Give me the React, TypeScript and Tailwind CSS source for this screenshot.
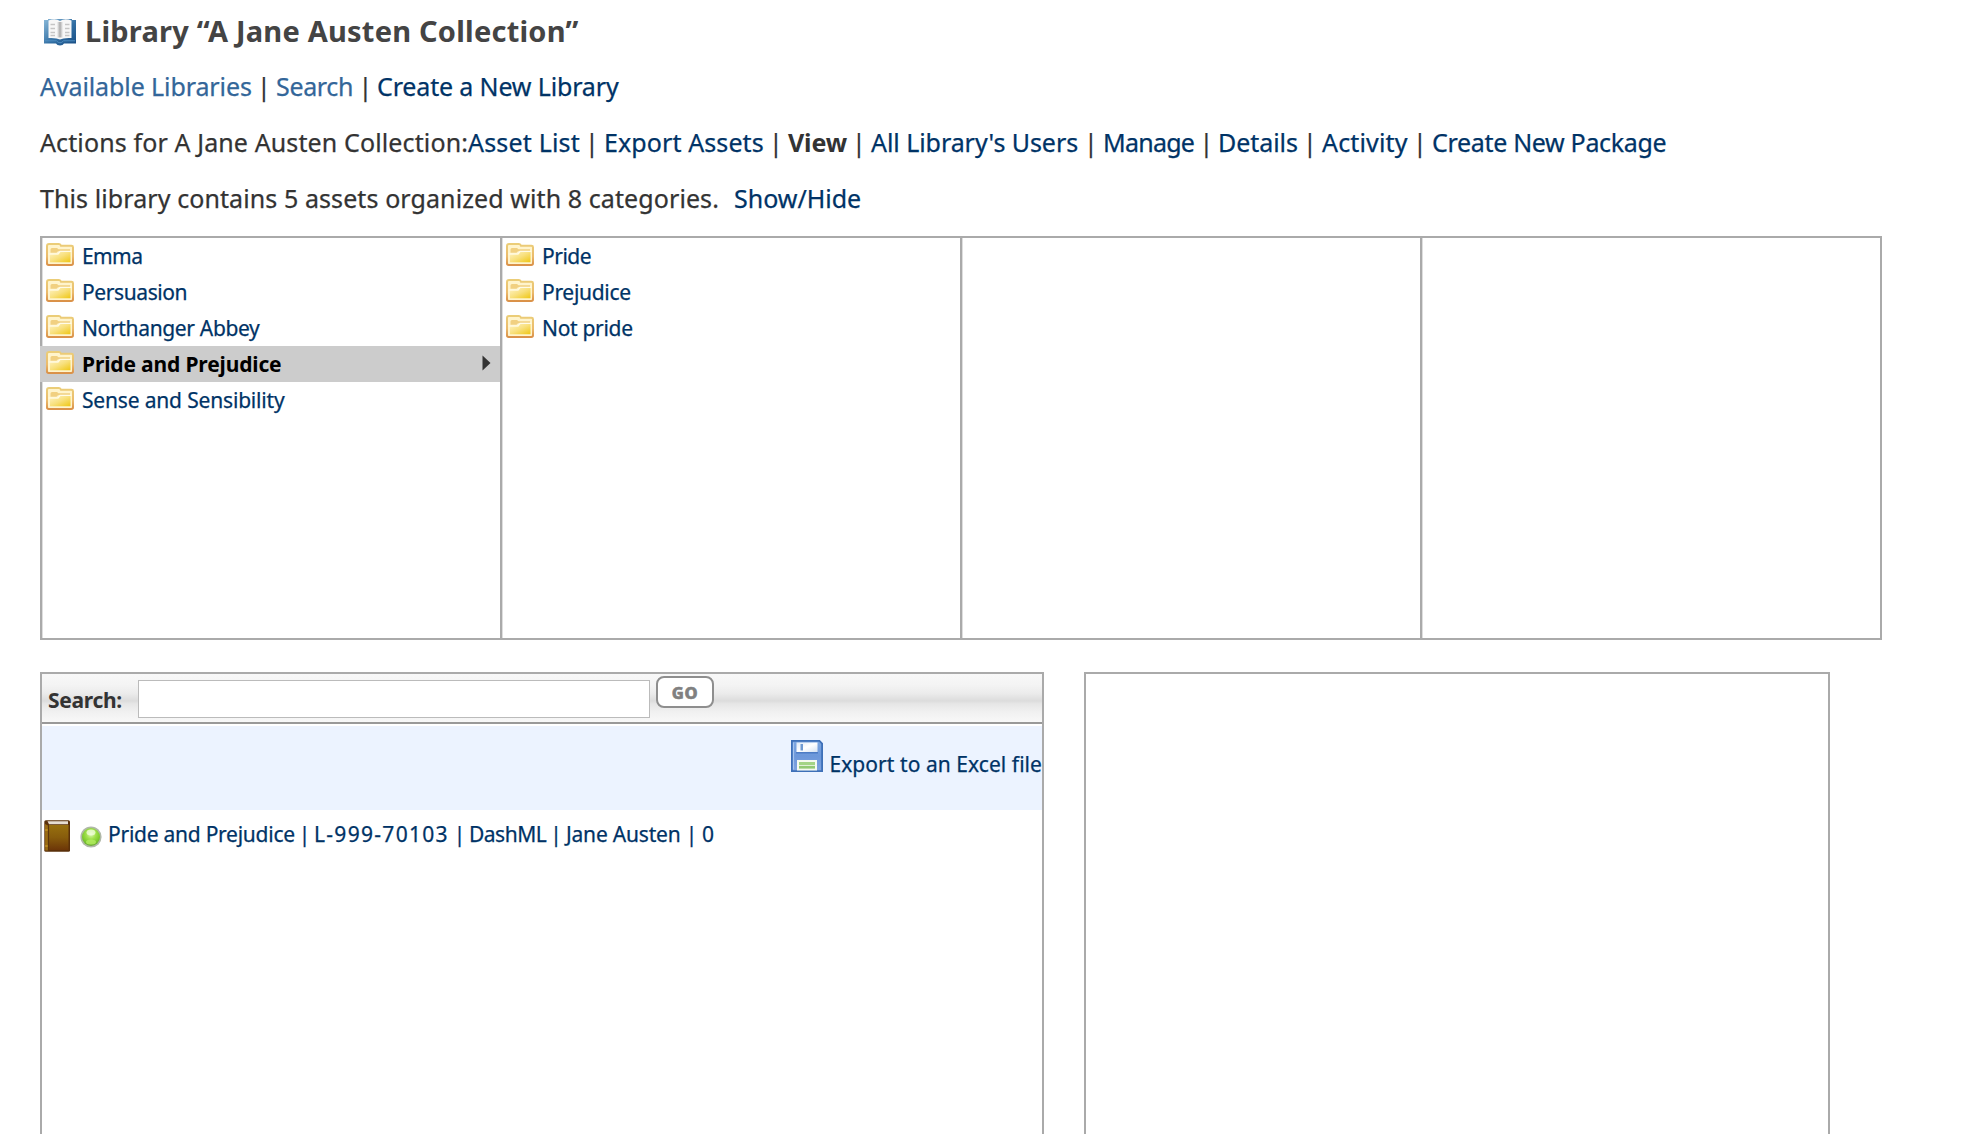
import type { ReactNode } from 'react';

const NAVY = 'text-[#003366]';

function Folder() {
  return (
    <svg className="h-[23px] w-7 shrink-0" viewBox="0 0 28 23" aria-hidden="true">
      <defs>
        <linearGradient id="folderEdge" x1="0" y1="0" x2="0" y2="1">
          <stop offset="0" stopColor="#ebcd78" />
          <stop offset="0.6" stopColor="#ebbb6c" />
          <stop offset="1" stopColor="#da9148" />
        </linearGradient>
        <linearGradient id="folderFill" x1="0" y1="0" x2="1" y2="1">
          <stop offset="0" stopColor="#fff3c4" />
          <stop offset="0.5" stopColor="#f8e07c" />
          <stop offset="1" stopColor="#efc714" />
        </linearGradient>
      </defs>
      <path d="M1 3Q1 1 3 1h10q1.500 0 2 1.800h10.500q1.500 0 1.500 1.400v16q0 1.700-1.800 1.700H2.700Q1 21.900 1 20.200z" fill="#fff4cc" stroke="url(#folderEdge)" strokeWidth="2" />
      <path d="M4.500 6.500q0-1.500 1.500-1.500h5l1.500 1.200H24v2H12l-1.500 1.500h-6z" fill="#f1d081" />
      <path d="M4 11.500h8.500l2-2.500H24.500v10.200H4z" fill="url(#folderFill)" />
      <path d="M2.500 11h9.500l2-2.600h11.500" fill="none" stroke="#fffbe8" strokeWidth="1.200" />
    </svg>
  );
}

function OpenBook() {
  return (
    <svg className="h-7 w-8 shrink-0" viewBox="0 0 32 28" aria-hidden="true">
      <defs>
        <linearGradient id="cover" x1="0" y1="0" x2="1" y2="1">
          <stop offset="0" stopColor="#8ab9d9" />
          <stop offset="0.55" stopColor="#326fa3" />
          <stop offset="1" stopColor="#174c83" />
        </linearGradient>
        <linearGradient id="gutter" x1="0" y1="0" x2="1" y2="0">
          <stop offset="0" stopColor="#f5f5f5" />
          <stop offset="0.5" stopColor="#aaa" />
          <stop offset="1" stopColor="#f5f5f5" />
        </linearGradient>
      </defs>
      <path d="M0 2h4V1h24v1h4v23.500H20q-1 2-4 2t-4-2H0z" fill="url(#cover)" />
      <path d="M4.500 2.500q7-2.500 11.500.5 4.500-3 11.500-.5V20q-8-.5-11.500 1.500-3.500-2-11.500-1.500z" fill="#f7f7f7" />
      <rect x="13" y="4" width="6" height="15.500" fill="url(#gutter)" />
      <path d="M6.500 6.500H11M6.500 10.500H11M6.500 14.500H11M6.500 17.500H11M21 6.500h4.500M21 10.500h4.500M21 14.500h4.500M21 17.500h4.500" stroke="#c5c5c5" strokeWidth="1.300" />
      <path d="M1 22.800h11.500q1.500 2 3.500 2t3.500-2H31" fill="none" stroke="#4f8dc0" strokeWidth="1" />
    </svg>
  );
}

function ClosedBook() {
  return (
    <svg className="h-8 w-[26px] shrink-0" viewBox="0 0 26 32" aria-hidden="true">
      <defs>
        <linearGradient id="leather" x1="0" y1="0" x2="0" y2="1">
          <stop offset="0" stopColor="#98700f" />
          <stop offset="0.5" stopColor="#875c0c" />
          <stop offset="1" stopColor="#6c3608" />
        </linearGradient>
      </defs>
      <rect x="0.300" y="0.300" width="25.700" height="31.500" rx="1.500" fill="#5a300a" />
      <path d="M3.500 1.200h20.500v3H5z" fill="#e6ddd2" />
      <rect x="5" y="5" width="19.500" height="25" fill="url(#leather)" />
      <path d="M1 4l3 1.500V30.500H1.200z" fill="#9a6b12" />
      <path d="M4.500 5v26" stroke="#5c350a" strokeWidth="1.200" />
      <path d="M1.200 10h2.600M1.200 26h2.600" stroke="#d9a92e" strokeWidth="1" />
    </svg>
  );
}

function StatusBall() {
  return (
    <svg className="size-[22px] shrink-0" viewBox="0 0 22 22" aria-hidden="true">
      <defs>
        <radialGradient id="ball" cx="0.5" cy="0.35" r="0.62">
          <stop offset="0" stopColor="#dcf7b8" />
          <stop offset="0.4" stopColor="#a4e250" />
          <stop offset="0.8" stopColor="#7cc92c" />
          <stop offset="1" stopColor="#70ad3a" />
        </radialGradient>
      </defs>
      <circle cx="11" cy="11" r="10.600" fill="#b0b8a8" />
      <circle cx="11" cy="11" r="9" fill="url(#ball)" />
      <ellipse cx="11" cy="6.500" rx="4.500" ry="3" fill="#f3ffe0" opacity="0.750" />
      <ellipse cx="11" cy="16" rx="5" ry="2.500" fill="#b3ec62" opacity="0.800" />
    </svg>
  );
}

function Floppy() {
  return (
    <svg className="size-8 shrink-0" viewBox="0 0 32 32" aria-hidden="true">
      <defs>
        <linearGradient id="disk" x1="0" y1="0" x2="0" y2="1">
          <stop offset="0" stopColor="#7da6e0" />
          <stop offset="0.5" stopColor="#6c97da" />
          <stop offset="1" stopColor="#7fa3e0" />
        </linearGradient>
        <linearGradient id="shutter" x1="0" y1="0" x2="1" y2="1">
          <stop offset="0" stopColor="#dfe9f5" />
          <stop offset="0.5" stopColor="#fff" />
          <stop offset="1" stopColor="#d5e2f3" />
        </linearGradient>
      </defs>
      <path d="M.9.900H28.500L31.100 3.500V31.100H.9z" fill="url(#disk)" stroke="#3e70b8" strokeWidth="1.800" />
      <path d="M2.500 2.500v27" stroke="#a5c4ee" strokeWidth="1.200" />
      <rect x="5.500" y="2.500" width="21" height="9.500" fill="url(#shutter)" />
      <rect x="9.500" y="4" width="2.500" height="6.500" fill="#6f9ad2" />
      <path d="M5 12.800h22" stroke="#4a79c2" strokeWidth="1.400" />
      <rect x="6" y="20" width="20" height="10.500" fill="#f5faf0" />
      <rect x="8" y="22" width="16" height="3" fill="#a4d486" />
      <rect x="8" y="25.800" width="16" height="2.800" fill="#93c974" />
    </svg>
  );
}

function Link({ className, children }: { className: string; children: ReactNode }) {
  return (
    <a href="#" className={`block shrink-0 ${className}`}>
      {children}
    </a>
  );
}

function Bar({ className }: { className: string }) {
  return <span className={`block shrink-0 text-center ${className}`}>|</span>;
}

function FolderRow({ label, tracking }: { label: string; tracking: string }) {
  return (
    <li className="flex h-9 pl-1 leading-9">
      <div className="pt-[5px]">
        <Folder />
      </div>
      <Link className={`ml-2 ${NAVY} ${tracking}`}>{label}</Link>
    </li>
  );
}

const column = 'w-[460px] border-l-2 border-[#aaaaaa] shadow-[inset_1px_0_0_#dedede]';

export default function App() {
  return (
    <div className="h-[1134px] w-[1988px] overflow-hidden whitespace-nowrap bg-white pl-10 font-['Noto_Sans',sans-serif] text-[#333333] [-webkit-text-stroke:0.25px]">
      <h1 className="flex h-[58px] pl-1 pt-[11px] text-[29px] font-bold leading-10 tracking-[0.22px] text-[#444444] [-webkit-text-stroke:0]">
        <div className="pt-[7px]">
          <OpenBook />
        </div>
        <span className="ml-[9px]">Library “A Jane Austen Collection”</span>
      </h1>

      <nav className="flex h-14 text-[25px] leading-[56px]">
        <Link className="w-[212px] tracking-[-0.1px] text-[#336699]">Available Libraries</Link>
        <Bar className="w-[24px]" />
        <Link className="w-[78px] tracking-[-0.35px] text-[#336699]">Search</Link>
        <Bar className="w-[23px]" />
        <Link className={`tracking-[-0.15px] ${NAVY}`}>Create a New Library</Link>
      </nav>

      <nav className="flex h-14 text-[25px] leading-[56px]">
        <span className="w-[428px] shrink-0 tracking-[0.12px]">Actions for A Jane Austen Collection:</span>
        <Link className={`w-[112px] tracking-[0.19px] ${NAVY}`}>Asset List</Link>
        <Bar className="w-6" />
        <Link className={`w-[160px] tracking-[0.1px] ${NAVY}`}>Export Assets</Link>
        <Bar className="w-6" />
        <b className="w-[59px] shrink-0 tracking-[-0.15px] [-webkit-text-stroke:0]">View</b>
        <Bar className="w-6" />
        <Link className={`w-[208px] tracking-[-0.06px] ${NAVY}`}>All Library's Users</Link>
        <Bar className="w-6" />
        <Link className={`w-[92px] tracking-[-0.75px] ${NAVY}`}>Manage</Link>
        <Bar className="w-[23px]" />
        <Link className={`w-[80px] tracking-[-0.05px] ${NAVY}`}>Details</Link>
        <Bar className="w-6" />
        <Link className={`w-[86px] tracking-[0.15px] ${NAVY}`}>Activity</Link>
        <Bar className="w-[24px]" />
        <Link className={`tracking-[-0.32px] ${NAVY}`}>Create New Package</Link>
      </nav>

      <p className="flex h-[66px] text-[25px] leading-[56px]">
        <span className="w-[694px] tracking-[0.09px]">This library contains 5 assets organized with 8 categories.</span>
        <Link className={NAVY}>Show/Hide</Link>
      </p>

      <section className="flex h-[404px] w-[1842px] border-y-2 border-r-2 border-[#aaaaaa] text-[21px]">
        <ul className={column}>
          <FolderRow label="Emma" tracking="tracking-[-0.6px]" />
          <FolderRow label="Persuasion" tracking="tracking-[-0.4px]" />
          <FolderRow label="Northanger Abbey" tracking="tracking-[-0.34px]" />
          <li className="-ml-[2px] flex h-9 bg-[#cccccc] pl-[6px] leading-9">
            <div className="pt-[5px]">
              <Folder />
            </div>
            <Link className="ml-2 font-bold tracking-[-0.15px] text-black [-webkit-text-stroke:0]">Pride and Prejudice</Link>
            <svg className="ml-auto mr-[9px] mt-[9px] h-4 w-[9px]" viewBox="0 0 9 16" aria-hidden="true">
              <path d="M.5.500L8.500 8L.5 15.500z" fill="#333" />
            </svg>
          </li>
          <FolderRow label="Sense and Sensibility" tracking="tracking-[-0.17px]" />
        </ul>
        <ul className={column}>
          <FolderRow label="Pride" tracking="tracking-[-0.5px]" />
          <FolderRow label="Prejudice" tracking="tracking-[-0.3px]" />
          <FolderRow label="Not pride" tracking="tracking-[-0.3px]" />
        </ul>
        <div className={column} />
        <div className={column} />
      </section>

      <div className="mt-8 flex gap-10 text-[21px]">
        <section className="h-[480px] w-[1004px] border-2 border-[#aaaaaa]">
          <form className="flex h-[50px] border-b-2 border-[#999999] bg-[linear-gradient(to_bottom,#f8f8f8_0%,#f4f4f4_22%,#ececec_40%,#dcdcdc_56%,#e6e6e6_62%,#f0f0f0_78%,#f8f8f8_100%)] pl-[6px]">
            <label htmlFor="query" className="w-[90px] pt-2 font-bold leading-9 tracking-[-0.3px] [-webkit-text-stroke:0]">
              Search:
            </label>
            <input id="query" className="mt-[6px] h-[38px] w-[512px] border border-[#bbbbbb] bg-white px-2 outline-none" />
            <button
              type="button"
              className="ml-[6px] mt-[2px] h-8 w-[58px] rounded-[8px] border-2 border-[#8e8e8e] bg-white text-[16.5px] font-extrabold leading-[27px] tracking-[0.6px] text-[#808080] [-webkit-text-stroke:0.6px]"
            >
              GO
            </button>
          </form>
          <div className="mt-[2px] flex h-[84px] justify-end bg-[#ecf3ff] pt-[14px]">
            <Floppy />
            <Link className={`ml-[6px] mt-[6px] h-9 leading-9 tracking-[0.06px] ${NAVY}`}>Export to an Excel file</Link>
          </div>
          <div className={`flex h-12 pl-[2px] pt-[6px] leading-9 ${NAVY}`}>
            <div>
              <div className="pt-1">
                <ClosedBook />
              </div>
            </div>
            <div className="ml-[10px] pt-[10px]">
              <StatusBall />
            </div>
            <Link className="ml-[6px] w-[187px] tracking-[-0.25px]">Pride and Prejudice</Link>
            <Bar className="w-[19px]" />
            <Link className="w-[136px] tracking-[1.3px]">L-999-70103</Link>
            <Bar className="w-[19px]" />
            <Link className="w-[77px] tracking-[-0.5px]">DashML</Link>
            <Bar className="w-[20px]" />
            <Link className="w-[115px] tracking-[-0.2px]">Jane Austen</Link>
            <Bar className="w-[21px]" />
            <span>0</span>
          </div>
        </section>
        <section className="h-[480px] w-[746px] border-2 border-[#aaaaaa]" />
      </div>
    </div>
  );
}
